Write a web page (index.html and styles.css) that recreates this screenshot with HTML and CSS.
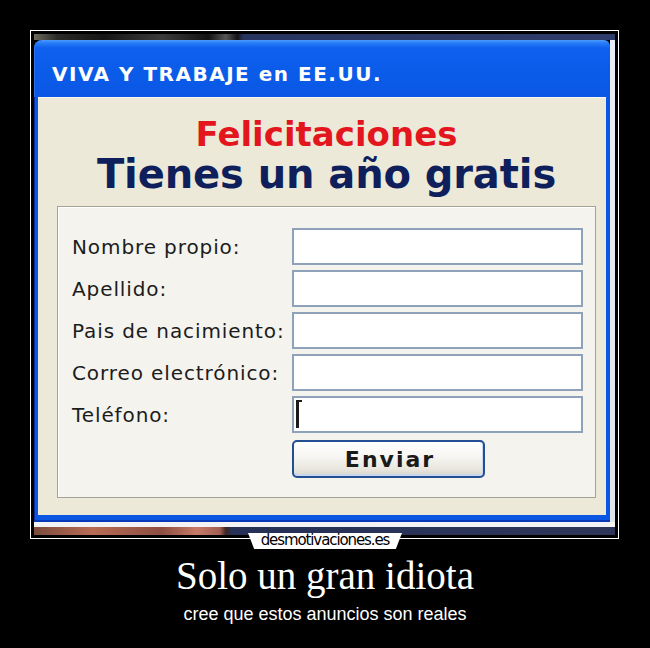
FILE: index.html
```html
<!DOCTYPE html>
<html lang="es">
<head>
<meta charset="UTF-8">
<meta name="viewport" content="width=device-width, initial-scale=1.0">
<title>Solo un gran idiota</title>
<link rel="stylesheet" href="styles.css">
</head>
<body>
    <div class="poster">
        <div class="frame">
            <div class="screen">
                <div class="strip-top"></div>
                <div class="screen-row">
                    <div class="window">
                        <div class="titlebar">VIVA Y TRABAJE en EE.UU.</div>
                        <div class="window-body">
                            <div class="content">
                                <h1 class="congrats">Felicitaciones</h1>
                                <h2 class="offer">Tienes un año gratis</h2>
                                <form class="signup" onsubmit="return false;">
                                    <label for="nombre">Nombre propio:</label>
                                    <input type="text" id="nombre" name="nombre">

                                    <label for="apellido">Apellido:</label>
                                    <input type="text" id="apellido" name="apellido">

                                    <label for="pais">Pais de nacimiento:</label>
                                    <input type="text" id="pais" name="pais">

                                    <label for="correo">Correo electrónico:</label>
                                    <input type="text" id="correo" name="correo">

                                    <label for="telefono">Teléfono:</label>
                                    <span class="field-wrap">
                                        <input type="text" id="telefono" name="telefono">
                                        <span class="caret"></span>
                                    </span>

                                    <button type="submit" class="send">Enviar</button>
                                </form>
                            </div>
                        </div>
                    </div>
                    <div class="edge"></div>
                </div>
                <div class="strip-white"></div>
                <div class="strip-bottom"></div>
            </div>
        </div>
        <div class="logo">desmotivaciones.es</div>
        <h1 class="caption">Solo un gran idiota</h1>
        <p class="subcaption">cree que estos anuncios son reales</p>
    </div>
</body>
</html>
```

FILE: styles.css
```css
body {
    margin: 0;
    background-color: #000;
}
.poster {
    width: 650px;
    height: 648px;
    padding-top: 30px;
    box-sizing: border-box;
}
.frame {
    width: 589px;
    margin-left: 30px;
    border: 1px solid #fff;
    padding: 3px;
    box-sizing: border-box;
    background: #000;
}
.screen {
    width: 581px;
    height: 501px;
    display: flex;
    flex-direction: column;
}
.strip-top {
    height: 6px;
    background: linear-gradient(90deg, #6d6a5e 0, #2a2a28 4%, #151515 12%, #3b3b3b 22%, #121212 30%, #555 33%, #131313 35%, #27345f 36%, #2f3d6c 100%);
}
.screen-row {
    display: flex;
}
.window {
    width: 576px;
}
.edge {
    width: 5px;
    background: linear-gradient(180deg, #e9edf5, #dfe3ea);
}

/* title bar of the popup */
.titlebar {
    height: 57px;
    box-sizing: border-box;
    padding: 24px 0 0 18px;
    border-radius: 8px 6px 0 0;
    background: linear-gradient(180deg, #4b9bff 0, #2a7ef8 5%, #0f60ee 14%, #0b5be9 60%, #0a57e4 100%);
    box-shadow: inset 1px 0 #2c6fe6;
    color: #fff;
    font-family: "DejaVu Sans", Verdana, sans-serif;
    font-weight: bold;
    font-size: 20px;
    line-height: 20px;
    letter-spacing: 1.5px;
}
.window-body {
    padding: 0 4px 7px 4px;
    background: #0b56e2;
    box-shadow: inset 1px 0 #0a2f9e, inset 0 -2px #0739b8;
}
.content {
    height: 418px;
    box-sizing: border-box;
    padding: 19px 10px 0 19px;
    background: #ece9d8;
    border-top: 1px solid #f6f5ee;
}
.congrats,
.offer {
    margin: 0;
    font-family: "DejaVu Sans", Verdana, sans-serif;
    font-weight: bold;
    text-align: center;
}
.congrats {
    margin-top: -1px;
    color: #e3151d;
    font-size: 34px;
    line-height: 36px;
}
.offer {
    margin-top: 1px;
    color: #0f1f5c;
    font-size: 40px;
    line-height: 42px;
    letter-spacing: -0.1px;
}

/* form panel */
.signup {
    margin: 11px 0 0 0;
    height: 292px;
    box-sizing: border-box;
    border: 1px solid #a2a295;
    box-shadow: inset 1px 1px #fff;
    background: #f4f3ee;
    padding: 21px 12px 0 14px;
    display: grid;
    grid-template-columns: 220px 291px;
    grid-auto-rows: 37px;
    row-gap: 5px;
    align-items: center;
}
.signup label {
    font-family: "DejaVu Sans", Verdana, sans-serif;
    font-size: 20px;
    letter-spacing: 0.9px;
    color: #1c1c1c;
    white-space: nowrap;
}
.signup input[type="text"] {
    width: 100%;
    height: 37px;
    margin: 0;
    box-sizing: border-box;
    border: 2px solid #8ea3ba;
    background: #fff;
    padding: 0 6px;
}
.field-wrap {
    position: relative;
    display: block;
    height: 37px;
}
.caret {
    position: absolute;
    left: 4px;
    top: 4px;
    width: 3px;
    height: 26px;
    border-left: 3px solid #1b1b1b;
    border-top: 2px solid #1b1b1b;
}
.send {
    grid-column: 2;
    width: 193px;
    height: 38px;
    margin-top: 5px;
    border: 2px solid #214f92;
    border-radius: 5px;
    background: linear-gradient(180deg, #ffffff 0, #f6f5f1 45%, #e8e6de 80%, #d8d4c8 100%);
    box-shadow: inset 0 -2px #c9d8ef, inset -1px 0 #c9d8ef;
    font-family: "DejaVu Sans", Verdana, sans-serif;
    font-weight: bold;
    font-size: 22px;
    letter-spacing: 2px;
    color: #1a1a1a;
    padding: 0 0 0 3px;
    cursor: pointer;
}

.strip-white {
    height: 5px;
    background: #f3f3f6;
}
.strip-bottom {
    height: 8px;
    background: linear-gradient(90deg, #7b4b3c 0, #b86b55 10%, #8d4e42 22%, #c77a67 28%, #a25e52 32%, #3c2524 33%, #263056 34%, #2d3659 100%);
}

/* site tab under the picture */
.logo {
    width: 154px;
    height: 16px;
    margin: -6px auto 0;
    background: #fff;
    clip-path: polygon(0 0, 100% 0, 96% 100%, 4% 100%);
    color: #000;
    font-family: "DejaVu Sans", Verdana, sans-serif;
    font-size: 15px;
    line-height: 15px;
    letter-spacing: -1.1px;
    text-align: center;
}
.caption {
    margin: 5px 0 0;
    color: #fff;
    font-family: "Liberation Serif", "Times New Roman", serif;
    font-weight: normal;
    font-size: 39px;
    line-height: 44px;
    text-align: center;
}
.subcaption {
    margin: 6px 0 0;
    color: #fff;
    font-family: "Liberation Sans", Arial, sans-serif;
    font-size: 18px;
    line-height: 20px;
    text-align: center;
}
```
